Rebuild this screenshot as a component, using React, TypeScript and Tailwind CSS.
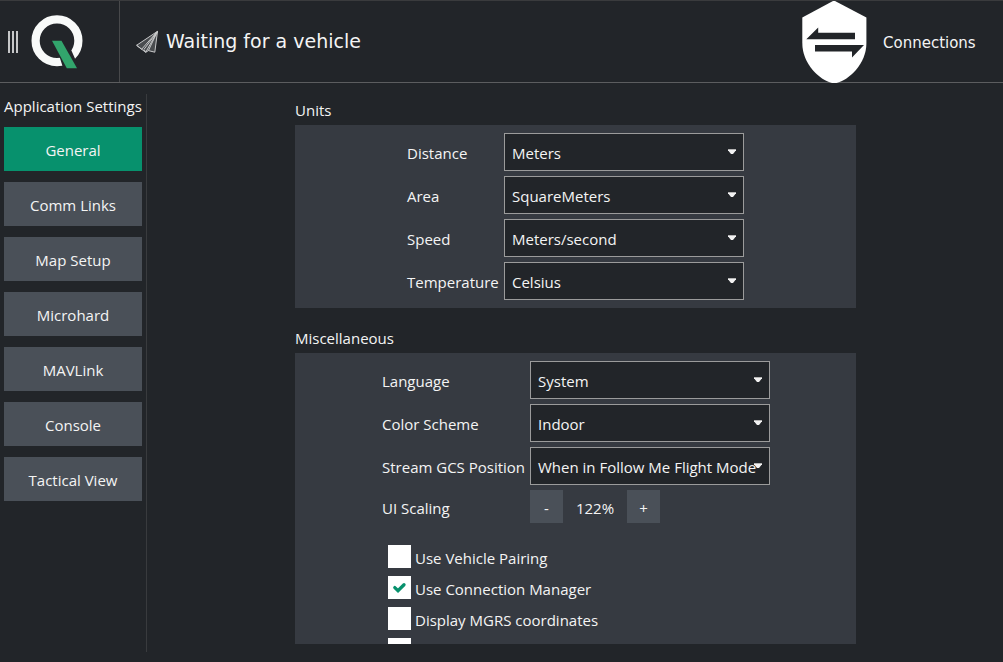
import React from "react";

const NAV = ["General", "Comm Links", "Map Setup", "Microhard", "MAVLink", "Console", "Tactical View"];

function Select({ value }: { value: string }) {
  return (
    <div className="relative flex h-[38px] w-[240px] items-center border border-[#9b9b9b] bg-[#222529] pt-[2px] pl-[7px] whitespace-nowrap">
      {value}
      <svg className="absolute right-[7px] top-[15px]" width="8" height="6" viewBox="0 0 8 6">
        <path d="M0 0H8V1.2L5 5H3L0 1.2Z" fill="#f2f2f2" />
        <path d="M0 0.5H8" stroke="#b4b4b4" />
      </svg>
    </div>
  );
}

function Row({ label, value, labelWidth }: { label: string; value: string; labelWidth: string }) {
  return (
    <div className="flex h-[38px] items-center">
      <div className={`${labelWidth} pt-[2px] whitespace-nowrap`}>{label}</div>
      <Select value={value} />
    </div>
  );
}

function Check({ label, checked = false }: { label: string; checked?: boolean }) {
  return (
    <div className="flex h-[23px] shrink-0 items-center gap-1">
      <div className="flex size-[23px] items-center justify-center bg-white">
        {checked && (
          <svg width="23" height="23" viewBox="0 0 23 23" fill="none">
            <path d="M6.8 11.6L10 14.6L16 8.7" stroke="#07916d" strokeWidth="3.3" strokeLinecap="round" />
          </svg>
        )}
      </div>
      <span className="pt-[3px]">{label}</span>
    </div>
  );
}

function Logo() {
  return (
    <svg className="ml-[12px]" width="54" height="55" viewBox="30 14 54 55">
      <circle cx="57" cy="40.7" r="21.4" fill="none" stroke="#f8faf9" strokeWidth="8.2" />
      <path d="M58 53L60 58.3L62.8 67V69H80L75.3 59.3L71.5 50.7L66 43Z" fill="#222529" />
      <path d="M52 40.8H61.5L77 68.2H66.8Z" fill="#32a56c" />
    </svg>
  );
}

function PaperPlane() {
  return (
    <svg className="ml-4" width="22" height="23" viewBox="136 30 22 23" fill="none" strokeLinejoin="round">
      <path d="M157.5 31.3L136.6 45.3L141.6 49.8L144.6 49.2L145.7 52.3L148.4 50.6L154.6 52.2Z" fill="#ffffff" fillOpacity="0.18" />
      <path d="M157.5 31.3L136.6 45.3L141.6 49.3L157.5 31.3L145.7 52.3L144 49.4L157.5 31.3L148.4 50.6L154.8 52.2L157.5 31.3M136.6 45.3L145.7 52.3L148.4 50.6" stroke="#c8c9ca" strokeWidth="1" />
    </svg>
  );
}

export default function App() {
  return (
    <div className="flex h-[662px] w-[1003px] flex-col overflow-hidden bg-[#222529] font-['Open_Sans',sans-serif] text-[15px] leading-5 text-[#f4f4f4]">
      <header className="flex h-[83px] shrink-0 items-center border-t border-b border-t-[#3a3b3d] border-b-[#5c5d5f] font-['DejaVu_Sans',sans-serif]">
        <div className="flex h-full w-[120px] items-center border-r border-[#48494b] pl-2">
          <div className="flex h-[22px] gap-[2px]">
            <div className="w-[2px] bg-[#c6c7c8]" />
            <div className="w-[2px] bg-[#c6c7c8]" />
            <div className="w-[2px] bg-[#c6c7c8]" />
          </div>
          <Logo />
        </div>
        <PaperPlane />
        <div className="ml-2 pb-px text-[19px]">Waiting for a vehicle</div>
        <svg className="-mb-px ml-auto shrink-0" width="66" height="82" viewBox="801 1 66 82">
          <path d="M833 1H835L866.4 17.5V43C866.4 64 849 80 836.5 83H832C819.5 80 802.3 64 802.3 43V17.5Z" fill="#fff" />
          <path d="M806.3 39.3L818.2 27.5V32.8H855V39.3ZM864 45.1L852 57.5V51.6H815V45.1Z" fill="#222529" />
        </svg>
        <div className="ml-[16px] w-[120px] pt-[2px]">Connections</div>
      </header>

      <div className="flex min-h-0 flex-1">
        <aside className="mt-[11px] mb-[10px] w-[147px] border-r border-[#393b3e] pl-1">
          <div className="pt-[2px] whitespace-nowrap">Application Settings</div>
          <nav className="mt-[11px] flex w-[138px] flex-col gap-[11px]">
            {NAV.map((n, i) => (
              <button key={n} className={`h-[44px] pt-[2px] ${i === 0 ? "bg-[#07916d]" : "bg-[#4a5058]"}`}>
                {n}
              </button>
            ))}
          </nav>
        </aside>

        <main className="ml-[148px] w-[561px] pt-[17px]">
          <h2>Units</h2>
          <section className="mt-[5px] flex h-[183px] flex-col gap-[5px] bg-[#363a41] pt-2 pl-[112px]">
            <Row labelWidth="w-[97px]" label="Distance" value="Meters" />
            <Row labelWidth="w-[97px]" label="Area" value="SquareMeters" />
            <Row labelWidth="w-[97px]" label="Speed" value="Meters/second" />
            <Row labelWidth="w-[97px]" label="Temperature" value="Celsius" />
          </section>
          <h2 className="mt-[20px]">Miscellaneous</h2>
          <section className="mt-[5px] h-[291px] overflow-hidden bg-[#363a41] pt-2 pl-[87px]">
            <div className="flex flex-col gap-[5px]">
              <Row labelWidth="w-[148px]" label="Language" value="System" />
              <Row labelWidth="w-[148px]" label="Color Scheme" value="Indoor" />
              <Row labelWidth="w-[148px]" label="Stream GCS Position" value="When in Follow Me Flight Mode" />
              <div className="flex h-[33px] items-center">
                <div className="w-[148px] pt-[3px]">UI Scaling</div>
                <button className="size-[33px] bg-[#4a5058] pt-[3px]">-</button>
                <div className="w-[64px] pt-[3px] text-center">122%</div>
                <button className="size-[33px] bg-[#4a5058] pt-[3px]">+</button>
              </div>
            </div>
            <div className="mt-[22px] ml-[6px] flex flex-col gap-2">
              <Check label="Use Vehicle Pairing" />
              <Check label="Use Connection Manager" checked />
              <Check label="Display MGRS coordinates" />
              <Check label="" />
            </div>
          </section>
        </main>
      </div>
    </div>
  );
}
